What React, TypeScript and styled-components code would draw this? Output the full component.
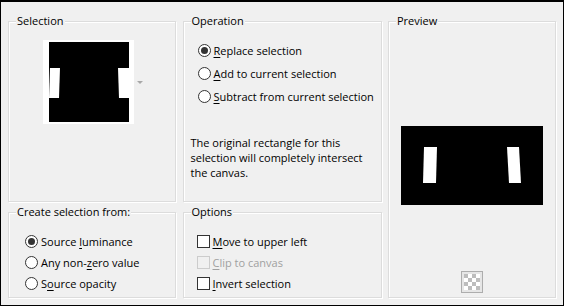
import React from 'react';
import styled, { createGlobalStyle } from 'styled-components';

/* -------------------------------------------------------------------------- */
/* Global                                                                     */
/* -------------------------------------------------------------------------- */

const GlobalStyle = createGlobalStyle`
  html, body {
    margin: 0;
    padding: 0;
    background: #f0f0f0;
  }
  * {
    box-sizing: border-box;
  }
`;

const UI_FONT = `"Open Sans", "Noto Sans", "Liberation Sans", sans-serif`;

/* -------------------------------------------------------------------------- */
/* Styled Components                                                          */
/* -------------------------------------------------------------------------- */

const Dialog = styled.div`
  width: 564px;
  height: 306px;
  background: #f0f0f0;
  border-style: solid;
  border-color: #000;
  border-width: 2px 1px 1px 1px;
  padding: 19px 7px 7px 7px;
  display: grid;
  grid-template-columns: 168px 199px 168px;
  grid-template-rows: 181px 86px;
  column-gap: 6.5px;
  row-gap: 10px;
  font-family: ${UI_FONT};
  font-size: 11px;
  color: #000;
`;

const GroupBox = styled.section<{ $side?: boolean }>`
  position: relative;
  border: 1px solid #dcdcdc;
  box-shadow: inset 1px 1px 0 #fff, 1px 1px 0 #fff;
  display: flex;
  flex-direction: column;
  min-width: 0;
  ${(p) => (p.$side ? 'grid-column: 3; grid-row: 1 / span 2;' : '')}
`;

const Caption = styled.span`
  position: absolute;
  top: -9px;
  left: 7px;
  padding: 0 1px;
  background: #f0f0f0;
  line-height: 16px;
  white-space: nowrap;
`;

const Mn = styled.u`
  text-decoration-thickness: 1px;
  text-underline-offset: 2px;
`;

/* Selection ---------------------------------------------------------------- */

const ThumbRow = styled.div`
  display: flex;
  align-items: center;
  margin: 18px 0 0 34px;
  gap: 3px;
`;

const ThumbFrame = styled.div`
  background: #fff;
  padding: 2px 5px 2px 6px;
  display: flex;
`;

const DropArrow = styled.span`
  width: 0;
  height: 0;
  border-left: 3px solid transparent;
  border-right: 3px solid transparent;
  border-top: 3px solid #a8a8a8;
  margin-top: 1px;
`;

/* Radios & checks ----------------------------------------------------------- */

const OptionList = styled.div<{ $top: number; $left: number; $row: number }>`
  display: flex;
  flex-direction: column;
  padding: ${(p) => `${p.$top}px 0 0 ${p.$left}px`};

  & > label {
    height: ${(p) => p.$row}px;
  }
`;

const OptionRow = styled.label<{ $disabled?: boolean }>`
  display: flex;
  align-items: center;
  gap: 3px;
  white-space: nowrap;
  color: ${(p) => (p.$disabled ? '#a0a0a0' : '#000')};
`;

const RadioGlyph = styled.span<{ $checked?: boolean }>`
  width: 13px;
  height: 13px;
  border-radius: 50%;
  border: 1px solid #333;
  background: #fff;
  display: flex;
  align-items: center;
  justify-content: center;
  flex: none;

  &::after {
    content: '';
    width: 7px;
    height: 7px;
    border-radius: 50%;
    background: ${(p) => (p.$checked ? '#333' : 'transparent')};
  }
`;

const CheckGlyph = styled.span<{ $disabled?: boolean }>`
  width: 13px;
  height: 13px;
  border: 1px solid ${(p) => (p.$disabled ? '#cccccc' : '#333')};
  background: ${(p) => (p.$disabled ? '#f0f0f0' : '#fff')};
  flex: none;
`;

const Note = styled.p`
  margin: 27px 6px 0 7px;
  line-height: 15px;
`;

/* Preview ------------------------------------------------------------------- */

const PreviewCanvas = styled.div`
  margin: 104px auto 0;
  width: 142px;
  height: 79px;
  background: #000;
  display: flex;
`;

const CheckerButton = styled.div`
  margin: auto auto 4px;
  width: 22px;
  height: 22px;
  border: 1px solid #adadad;
  background: #e6e6e6;
  display: flex;
  align-items: center;
  justify-content: center;
`;

/* -------------------------------------------------------------------------- */
/* Pieces                                                                     */
/* -------------------------------------------------------------------------- */

const Radio: React.FC<{ checked?: boolean; children: React.ReactNode }> = ({ checked, children }) => (
  <OptionRow>
    <RadioGlyph $checked={checked} />
    <span>{children}</span>
  </OptionRow>
);

const Check: React.FC<{ disabled?: boolean; children: React.ReactNode }> = ({ disabled, children }) => (
  <OptionRow $disabled={disabled}>
    <CheckGlyph $disabled={disabled} />
    <span>{children}</span>
  </OptionRow>
);

const SelectionThumb = () => (
  <svg width="80" height="80" viewBox="0 0 80 80">
    <rect width="80" height="80" fill="#000" />
    <polygon points="1,26 11,26 10,56 0,56" fill="#fff" />
    <polygon points="69,26 80,26 80,56 70,56" fill="#fff" />
  </svg>
);

const PreviewImage = () => (
  <svg width="142" height="79" viewBox="0 0 142 79">
    <rect width="142" height="79" fill="#000" />
    <polygon points="23,21 36,21 35,57 22,57" fill="#fff" />
    <polygon points="106,21 118,21 120,57 108,57" fill="#fff" />
  </svg>
);

const CheckerIcon = () => (
  <svg width="16" height="16" viewBox="0 0 16 16">
    <rect width="16" height="16" fill="#fff" />
    {Array.from({ length: 16 }).map((_, i) => {
      const x = (i % 4) * 4;
      const y = Math.floor(i / 4) * 4;
      return (i % 4) % 2 === Math.floor(i / 4) % 2 ? (
        <rect key={i} x={x} y={y} width="4" height="4" fill="#bdbdbd" />
      ) : null;
    })}
  </svg>
);

/* -------------------------------------------------------------------------- */
/* Component                                                                  */
/* -------------------------------------------------------------------------- */

export default function App() {
  return (
    <>
      <GlobalStyle />
      <Dialog>
        <GroupBox>
          <Caption>Selection</Caption>
          <ThumbRow>
            <ThumbFrame>
              <SelectionThumb />
            </ThumbFrame>
            <DropArrow />
          </ThumbRow>
        </GroupBox>

        <GroupBox>
          <Caption>Operation</Caption>
          <OptionList $top={17} $left={14} $row={23}>
            <Radio checked>
              <Mn>R</Mn>eplace selection
            </Radio>
            <Radio>
              <Mn>A</Mn>dd to current selection
            </Radio>
            <Radio>
              <Mn>S</Mn>ubtract from current selection
            </Radio>
          </OptionList>
          <Note>
            The original rectangle for this selection will completely intersect the canvas.
          </Note>
        </GroupBox>

        <GroupBox $side>
          <Caption>Preview</Caption>
          <PreviewCanvas>
            <PreviewImage />
          </PreviewCanvas>
          <CheckerButton>
            <CheckerIcon />
          </CheckerButton>
        </GroupBox>

        <GroupBox>
          <Caption>Create selection from:</Caption>
          <OptionList $top={18} $left={16} $row={21}>
            <Radio checked>
              Source <Mn>l</Mn>uminance
            </Radio>
            <Radio>
              Any non-<Mn>z</Mn>ero value
            </Radio>
            <Radio>
              S<Mn>o</Mn>urce opacity
            </Radio>
          </OptionList>
        </GroupBox>

        <GroupBox>
          <Caption>Options</Caption>
          <OptionList $top={18} $left={13} $row={21}>
            <Check>
              <Mn>M</Mn>ove to upper left
            </Check>
            <Check disabled>
              <Mn>C</Mn>lip to canvas
            </Check>
            <Check>
              <Mn>I</Mn>nvert selection
            </Check>
          </OptionList>
        </GroupBox>
      </Dialog>
    </>
  );
}
